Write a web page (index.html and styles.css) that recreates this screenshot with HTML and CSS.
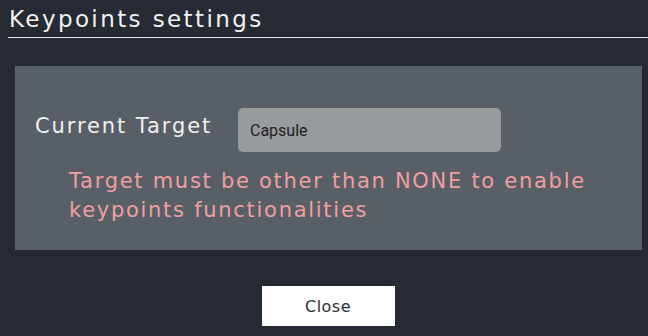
FILE: index.html
```html
<!DOCTYPE html>
<html>
<head>
<meta charset="utf-8">
<link rel="stylesheet" href="styles.css">
</head>
<body>
<div class="page">
  <h1 class="title">Keypoints settings</h1>
  <div class="panel">
    <div class="row">
      <span class="label">Current Target</span>
      <div class="input">Capsule</div>
    </div>
    <p class="warn">Target must be other than NONE to enable keypoints functionalities</p>
  </div>
  <div class="actions">
    <button class="btn">Close</button>
  </div>
</div>
</body>
</html>
```
FILE: styles.css
```css
html, body {
  margin: 0;
  padding: 0;
  background: #262a33;
  width: 648px;
  height: 336px;
  overflow: hidden;
}
.page {
  display: flex;
  flex-direction: column;
  padding-left: 8px;
}
.title {
  margin: 0;
  height: 38px;
  box-sizing: border-box;
  padding: 5px 0 0 1px;
  border-bottom: 1px solid #e8e8e8;
  font-family: "DejaVu Sans", sans-serif;
  font-weight: normal;
  font-size: 23px;
  line-height: 28px;
  color: #f2f2f2;
  letter-spacing: 2.4px;
}
.panel {
  margin: 28px 6px 0 7px;
  height: 184px;
  box-sizing: border-box;
  background: #585f67;
  padding: 42px 0 0 20px;
}
.row {
  display: flex;
  align-items: center;
}
.label {
  width: 203px;
  font-family: "DejaVu Sans", sans-serif;
  font-size: 21px;
  color: #f0f0f0;
  letter-spacing: 1.9px;
  margin-top: -9px;
}
.input {
  width: 263px;
  height: 44px;
  box-sizing: border-box;
  background: #979b9e;
  border-radius: 5px;
  padding: 0 12px;
  display: flex;
  align-items: center;
  font-family: "Roboto", sans-serif;
  font-size: 16px;
  color: #1e1e1e;
}
.warn {
  margin: 15px 0 0 34px;
  width: 570px;
  font-family: "DejaVu Sans", sans-serif;
  font-size: 21px;
  line-height: 29px;
  color: #f0a0a0;
  letter-spacing: 1.72px;
}
.actions {
  display: flex;
  justify-content: center;
  margin-top: 36px;
}
.btn {
  width: 133px;
  height: 40px;
  border: none;
  background: #ffffff;
  font-family: "DejaVu Sans", sans-serif;
  font-size: 16px;
  color: #2e3038;
  letter-spacing: 0.5px;
  padding: 0;
}
```
